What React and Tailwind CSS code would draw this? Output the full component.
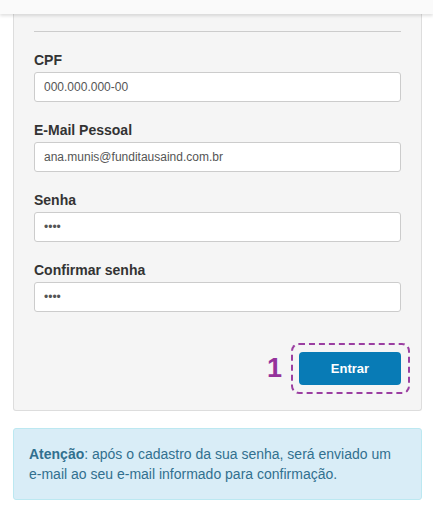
import React from 'react';

const fields = [
  { label: 'CPF', value: '000.000.000-00' },
  { label: 'E-Mail Pessoal', value: 'ana.munis@funditausaind.com.br' },
  { label: 'Senha', value: '••••' },
  { label: 'Confirmar senha', value: '••••' },
];

const App = () => {
  return (
    <div className="w-[433px] min-h-[515px] bg-white font-['Liberation_Sans',Arial,sans-serif] text-[#333]">
      <div className="relative z-10 h-[14px] bg-[#fafafa] shadow-[0_2px_3px_rgba(0,0,0,0.12)]" />

      <div className="ml-[13px] w-[409px] border border-t-0 border-[#dddddd] bg-[#f5f5f5] px-5 pt-[17px] pb-[25px] rounded-b-[3px]">
        <hr className="border-0 border-t border-[#cccccc] mb-[18px]" />

        {fields.map((f) => (
          <div key={f.label} className="mb-[18px]">
            <label className="block text-[14px] font-bold leading-5 mb-[2px]">{f.label}</label>
            <input
              readOnly
              value={f.value}
              className="block w-full h-[30px] px-[9px] text-[12px] text-[#555] bg-white border border-[#cccccc] rounded-[3px] outline-none"
            />
          </div>
        ))}

        <div className="flex justify-end items-center gap-[17px] pt-[22px]">
          <span className="text-[27px] font-bold leading-none text-[#94329b]">1</span>
          <div className="relative">
            <span className="absolute -top-[9px] -bottom-[9px] -left-[8px] -right-[9px] border-2 border-dashed border-[#9b3fa1] rounded-[8px]" />
            <button
              type="button"
              className="relative w-[102px] h-[33px] bg-[#087bb6] text-white text-[13px] font-bold rounded-[4px]"
            >
              Entrar
            </button>
          </div>
        </div>
      </div>

      <div className="ml-[13px] w-[409px] mt-[17px] p-[15px] bg-[#d9edf7] border border-[#bce8f1] rounded-[3px] text-[14px] leading-5 text-[#31708f]">
        <strong>Atenção</strong>: após o cadastro da sua senha, será enviado um e-mail ao seu e-mail informado para confirmação.
      </div>
    </div>
  );
};

export default App;
